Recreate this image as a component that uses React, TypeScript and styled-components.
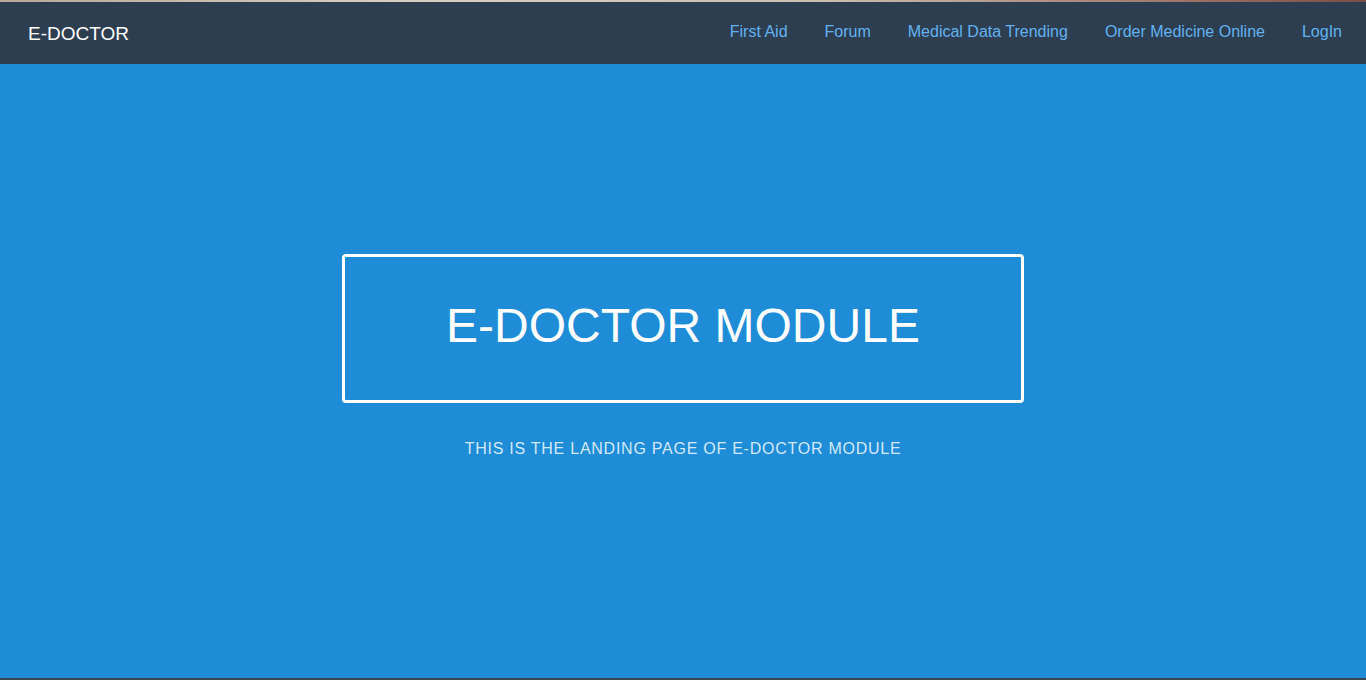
import React from "react";
import styled, { createGlobalStyle } from "styled-components";

const Global = createGlobalStyle`
  html, body { margin: 0; padding: 0; }
  body { font-family: "Liberation Sans", Arial, sans-serif; background: #1e8cd6; }
  * { box-sizing: border-box; }
`;

const Page = styled.div`
  display: flex;
  flex-direction: column;
  height: 680px;
  overflow: hidden;
`;

const TopStrip = styled.div`
  height: 2px;
  flex: none;
  background: linear-gradient(90deg, #b9a89a 0%, #d8cfc4 30%, #cbbfb2 60%, #a07a6c 85%, #7a4e44 100%);
`;

const NavBar = styled.header`
  flex: none;
  height: 62px;
  background: #2c3e50;
  display: flex;
  align-items: center;
  justify-content: space-between;
  padding: 0 24px 0 28px;
`;

const Brand = styled.a`
  color: #ffffff;
  font-size: 19px;
  text-decoration: none;
  padding-top: 2px;
`;

const NavLinks = styled.nav`
  display: flex;
  align-items: center;
  gap: 37px;
  padding-bottom: 2px;
`;

const NavLink = styled.a`
  color: #62b2f0;
  font-size: 16px;
  text-decoration: none;
`;

const Main = styled.main`
  flex: 1;
  background: #1e8cd6;
  display: flex;
  flex-direction: column;
  align-items: center;
  padding-top: 190px;
`;

const TitleBox = styled.div`
  width: 682px;
  height: 149px;
  border: 3px solid #ffffff;
  border-radius: 4px;
  display: flex;
  align-items: center;
  justify-content: center;
`;

const Title = styled.h1`
  margin: 0;
  color: #ffffff;
  font-size: 48px;
  font-weight: normal;
  line-height: 1;
  padding-bottom: 5px;
`;

const Subtitle = styled.p`
  margin: 37px 0 0;
  color: #d3e8f8;
  font-size: 16px;
  letter-spacing: 0.75px;
  line-height: 18px;
`;

const BottomStrip = styled.div`
  height: 2px;
  flex: none;
  background: #3b4650;
`;

const links = ["First Aid", "Forum", "Medical Data Trending", "Order Medicine Online", "LogIn"];

export default function App() {
  return (
    <>
      <Global />
      <Page>
        <TopStrip />
        <NavBar>
          <Brand href="#">E-DOCTOR</Brand>
          <NavLinks>
            {links.map((l) => (
              <NavLink key={l} href="#">
                {l}
              </NavLink>
            ))}
          </NavLinks>
        </NavBar>
        <Main>
          <TitleBox>
            <Title>E-DOCTOR MODULE</Title>
          </TitleBox>
          <Subtitle>THIS IS THE LANDING PAGE OF E-DOCTOR MODULE</Subtitle>
        </Main>
        <BottomStrip />
      </Page>
    </>
  );
}
